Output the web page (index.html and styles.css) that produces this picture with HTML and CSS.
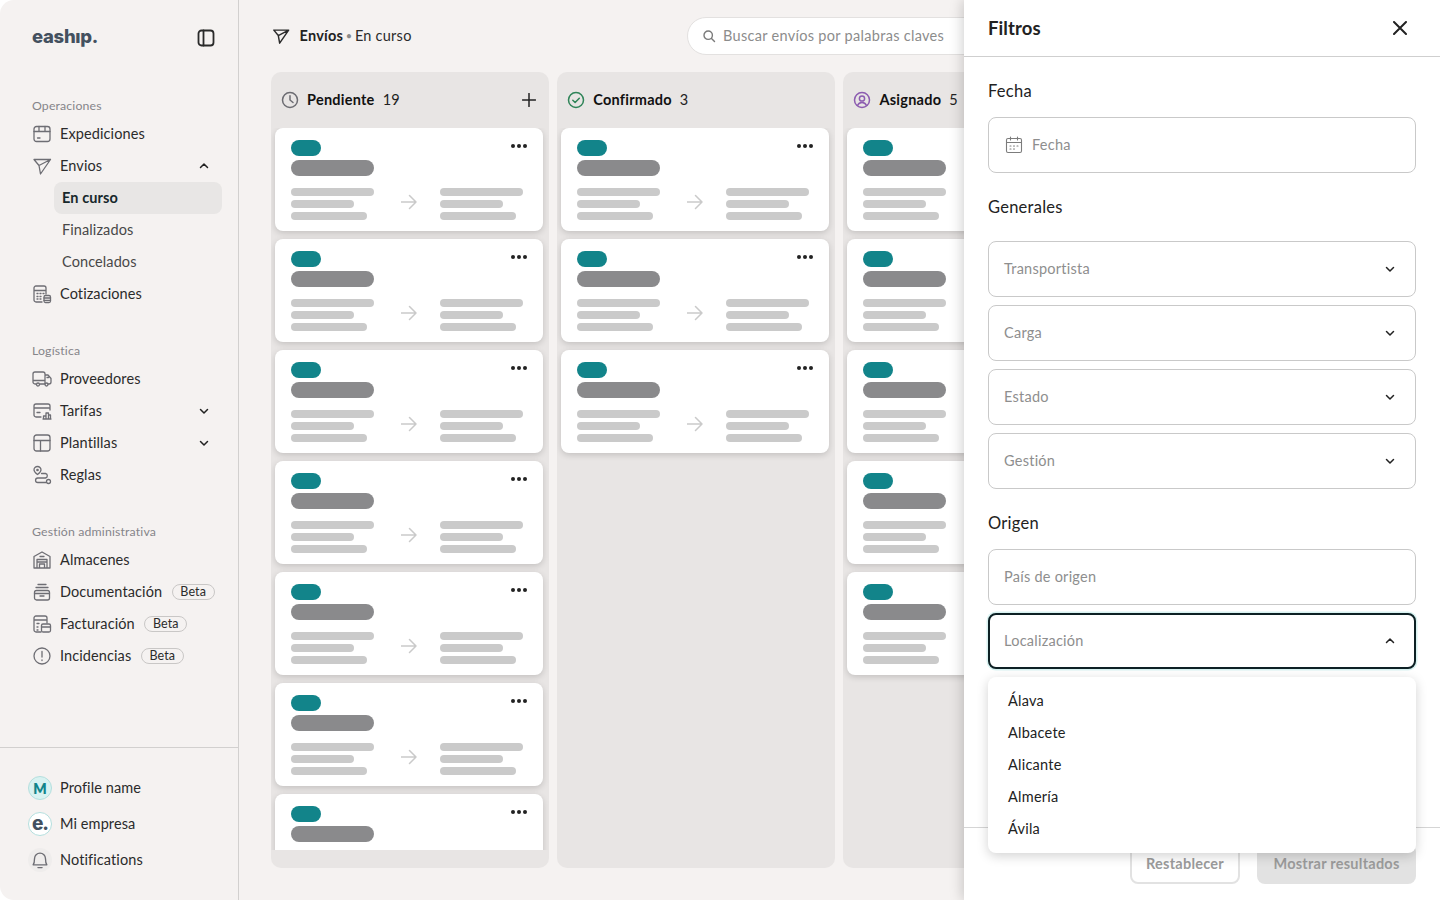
FILE: index.html
```html
<!DOCTYPE html>
<html lang="es">
<head>
<meta charset="utf-8">
<title>Envíos</title>
<link rel="stylesheet" href="styles.css">
</head>
<body>
<svg class="sprite" aria-hidden="true">
  <symbol id="i-box" viewBox="0 0 20 20"><rect x="2" y="2.500" width="16" height="15" rx="2.500"/><path d="M2 7.500h16M7 2.500v5M13 2.500v5M5.500 14h2.500"/></symbol>
  <symbol id="i-send" viewBox="0 0 20 20"><path d="M2 3.500h16.500L8.500 18 7 9.500 2 3.500zM7 9.500l11.500-6"/></symbol>
  <symbol id="i-calc" viewBox="0 0 20 20"><path d="M10 18H4a2 2 0 0 1-2-2V4a2 2 0 0 1 2-2h8a2 2 0 0 1 2 2v6M2 6.500h12M5 9.500h1M8 9.500h1M11 9.500h1M5 12.500h1M8 12.500h1M5 15h1M8 15h1"/><rect x="12" y="11.500" width="6.500" height="7" rx="1.500"/><path d="M12 14h6.500M12 16.300h6.500"/></symbol>
  <symbol id="i-truck" viewBox="0 0 20 20"><path d="M4 15H3a2 2 0 0 1-2-2V5a2 2 0 0 1 2-2h8a2 2 0 0 1 2 2v10H8M13 6h3l3 3.500V13a2 2 0 0 1-2 2h-1M1 11.500h12M15 8.500h1.500"/><circle cx="6" cy="15.500" r="1.500"/><circle cx="14.500" cy="15.500" r="1.500"/></symbol>
  <symbol id="i-rate" viewBox="0 0 20 20"><path d="M9 16H4a2 2 0 0 1-2-2V5a2 2 0 0 1 2-2h12a2 2 0 0 1 2 2v4M2 7h16M5 11.500h3"/><path d="M11.500 18v-3h2.500v3M14 18v-6h2.500v6M16.500 18v-4h2v4M11 18h8"/></symbol>
  <symbol id="i-layout" viewBox="0 0 20 20"><rect x="2" y="2" width="16" height="16" rx="2.500"/><path d="M2 7.500h16M8.500 7.500V18"/></symbol>
  <symbol id="i-rules" viewBox="0 0 20 20"><path d="M5.500 1.500a3.500 3.500 0 0 1 3.500 3.500c0 1.800-1.800 3.200-3.500 4.500C3.800 8.200 2 6.800 2 5a3.500 3.500 0 0 1 3.500-3.500z"/><circle cx="5.500" cy="5" r=".7"/><circle cx="16.500" cy="16.500" r="2"/><path d="M9.500 8.500h4a2.300 2.300 0 0 1 0 4.500H5.800a2.200 2.200 0 0 0 0 4.500h8.200"/></symbol>
  <symbol id="i-store" viewBox="0 0 20 20"><path d="M2 18V6.500L10 2l8 4.500V18zM5 18V9.500h10V18M5 12h10M7.500 14h5v4h-5zM8 6.500h4"/></symbol>
  <symbol id="i-doc" viewBox="0 0 20 20"><path d="M6 2.500h8M4 5.500h12"/><rect x="2.500" y="8.500" width="15" height="9.500" rx="2"/><path d="M2.500 11.500h15M8 14h4"/></symbol>
  <symbol id="i-bill" viewBox="0 0 20 20"><path d="M9 18H4a2 2 0 0 1-2-2V4a2 2 0 0 1 2-2h9a2 2 0 0 1 2 2v5M2 6h13M5 9.500h2M5 13h1M5 16h1"/><rect x="9.500" y="10" width="9" height="8" rx="1.500"/><path d="M9.500 13h9"/></symbol>
  <symbol id="i-alert" viewBox="0 0 20 20"><circle cx="10" cy="10" r="8"/><path d="M10 5.500v5.500M10 14v.5"/></symbol>
  <symbol id="i-panel" viewBox="0 0 20 20"><rect x="2.500" y="2.500" width="15" height="15" rx="3"/><path d="M7.500 2.500v15"/></symbol>
  <symbol id="i-bell" viewBox="0 0 16 16"><path d="M3 11.500c.8-1 1-2 1-4.500a4 4 0 0 1 8 0c0 2.500.2 3.500 1 4.500zM6.500 13.500h3"/></symbol>
  <symbol id="i-down" viewBox="0 0 12 12"><path d="M2.500 4.500 6 8l3.500-3.500"/></symbol>
  <symbol id="i-up" viewBox="0 0 12 12"><path d="M2.500 7.500 6 4l3.500 3.500"/></symbol>
  <symbol id="i-arrow" viewBox="0 0 16 16"><path d="M0 8h15M8.500 1.500 15 8l-6.500 6.500"/></symbol>
  <symbol id="i-dots" viewBox="0 0 16 4"><circle cx="2" cy="2" r="2"/><circle cx="8" cy="2" r="2"/><circle cx="14" cy="2" r="2"/></symbol>
</svg>

<div class="app">
  <aside class="sidebar">
    <div class="brand">
      <span class="logo">eashıp.</span>
      <svg class="icon icon-dark"><use href="#i-panel"/></svg>
    </div>

    <section class="nav-group">
      <h2 class="nav-label">Operaciones</h2>
      <a class="nav-row"><svg class="icon"><use href="#i-box"/></svg>Expediciones</a>
      <a class="nav-row"><svg class="icon"><use href="#i-send"/></svg><span class="grow">Envios</span><svg class="chev"><use href="#i-up"/></svg></a>
      <a class="nav-sub nav-sub-active">En curso</a>
      <a class="nav-sub">Finalizados</a>
      <a class="nav-sub">Concelados</a>
      <a class="nav-row"><svg class="icon"><use href="#i-calc"/></svg>Cotizaciones</a>
    </section>

    <section class="nav-group">
      <h2 class="nav-label">Logística</h2>
      <a class="nav-row"><svg class="icon"><use href="#i-truck"/></svg>Proveedores</a>
      <a class="nav-row"><svg class="icon"><use href="#i-rate"/></svg><span class="grow">Tarifas</span><svg class="chev"><use href="#i-down"/></svg></a>
      <a class="nav-row"><svg class="icon"><use href="#i-layout"/></svg><span class="grow">Plantillas</span><svg class="chev"><use href="#i-down"/></svg></a>
      <a class="nav-row"><svg class="icon"><use href="#i-rules"/></svg>Reglas</a>
    </section>

    <section class="nav-group">
      <h2 class="nav-label">Gestión administrativa</h2>
      <a class="nav-row"><svg class="icon"><use href="#i-store"/></svg>Almacenes</a>
      <a class="nav-row"><svg class="icon"><use href="#i-doc"/></svg>Documentación<span class="beta">Beta</span></a>
      <a class="nav-row"><svg class="icon"><use href="#i-bill"/></svg>Facturación<span class="beta">Beta</span></a>
      <a class="nav-row"><svg class="icon"><use href="#i-alert"/></svg>Incidencias<span class="beta">Beta</span></a>
    </section>

    <footer class="side-foot">
      <a class="foot-row"><span class="avatar avatar-m">M</span>Profile name</a>
      <a class="foot-row"><span class="avatar avatar-e">e.</span>Mi empresa</a>
      <a class="foot-row"><span class="avatar avatar-bell"><svg class="bell"><use href="#i-bell"/></svg></span>Notifications</a>
    </footer>
  </aside>

  <main class="main">
    <header class="topbar">
      <div class="crumbs">
        <svg class="icon icon-dark crumb-icon"><use href="#i-send"/></svg>
        <strong>Envíos</strong><span class="crumb-dot">•</span><span>En curso</span>
      </div>
      <div class="search">
        <svg class="search-icon" viewBox="0 0 14 14"><circle cx="6.200" cy="6.200" r="4.200"/><path d="m9.500 9.500 3 3"/></svg>
        <span>Buscar envíos por palabras claves</span>
      </div>
    </header>

    <div class="board">
      <section class="column">
        <header class="col-head">
          <svg class="status status-gray" viewBox="0 0 18 18"><circle cx="9" cy="9" r="7.500"/><path d="M9 4.800V9l3 2.500"/></svg>
          <b class="col-title">Pendiente</b><span class="col-count">19</span>
          <svg class="plus" viewBox="0 0 14 14"><path d="M7 .5v13M.5 7h13"/></svg>
        </header>
        <div class="cards">
          <article class="card"><div class="card-top"><span class="tag"></span><svg class="dots"><use href="#i-dots"/></svg></div><div class="name"></div><div class="route"><div class="stop"><i class="w1"></i><i class="w2"></i><i class="w3"></i></div><svg class="arrow"><use href="#i-arrow"/></svg><div class="stop"><i class="w1"></i><i class="w2"></i><i class="w3"></i></div></div></article>
          <article class="card"><div class="card-top"><span class="tag"></span><svg class="dots"><use href="#i-dots"/></svg></div><div class="name"></div><div class="route"><div class="stop"><i class="w1"></i><i class="w2"></i><i class="w3"></i></div><svg class="arrow"><use href="#i-arrow"/></svg><div class="stop"><i class="w1"></i><i class="w2"></i><i class="w3"></i></div></div></article>
          <article class="card"><div class="card-top"><span class="tag"></span><svg class="dots"><use href="#i-dots"/></svg></div><div class="name"></div><div class="route"><div class="stop"><i class="w1"></i><i class="w2"></i><i class="w3"></i></div><svg class="arrow"><use href="#i-arrow"/></svg><div class="stop"><i class="w1"></i><i class="w2"></i><i class="w3"></i></div></div></article>
          <article class="card"><div class="card-top"><span class="tag"></span><svg class="dots"><use href="#i-dots"/></svg></div><div class="name"></div><div class="route"><div class="stop"><i class="w1"></i><i class="w2"></i><i class="w3"></i></div><svg class="arrow"><use href="#i-arrow"/></svg><div class="stop"><i class="w1"></i><i class="w2"></i><i class="w3"></i></div></div></article>
          <article class="card"><div class="card-top"><span class="tag"></span><svg class="dots"><use href="#i-dots"/></svg></div><div class="name"></div><div class="route"><div class="stop"><i class="w1"></i><i class="w2"></i><i class="w3"></i></div><svg class="arrow"><use href="#i-arrow"/></svg><div class="stop"><i class="w1"></i><i class="w2"></i><i class="w3"></i></div></div></article>
          <article class="card"><div class="card-top"><span class="tag"></span><svg class="dots"><use href="#i-dots"/></svg></div><div class="name"></div><div class="route"><div class="stop"><i class="w1"></i><i class="w2"></i><i class="w3"></i></div><svg class="arrow"><use href="#i-arrow"/></svg><div class="stop"><i class="w1"></i><i class="w2"></i><i class="w3"></i></div></div></article>
          <article class="card"><div class="card-top"><span class="tag"></span><svg class="dots"><use href="#i-dots"/></svg></div><div class="name"></div><div class="route"><div class="stop"><i class="w1"></i><i class="w2"></i><i class="w3"></i></div><svg class="arrow"><use href="#i-arrow"/></svg><div class="stop"><i class="w1"></i><i class="w2"></i><i class="w3"></i></div></div></article>
        </div>
      </section>

      <section class="column">
        <header class="col-head">
          <svg class="status status-green" viewBox="0 0 18 18"><circle cx="9" cy="9" r="7.500"/><path d="m5.800 9.200 2.300 2.300 4.200-4.300"/></svg>
          <b class="col-title">Confirmado</b><span class="col-count">3</span>
        </header>
        <div class="cards">
          <article class="card"><div class="card-top"><span class="tag"></span><svg class="dots"><use href="#i-dots"/></svg></div><div class="name"></div><div class="route"><div class="stop"><i class="w1"></i><i class="w2"></i><i class="w3"></i></div><svg class="arrow"><use href="#i-arrow"/></svg><div class="stop"><i class="w1"></i><i class="w2"></i><i class="w3"></i></div></div></article>
          <article class="card"><div class="card-top"><span class="tag"></span><svg class="dots"><use href="#i-dots"/></svg></div><div class="name"></div><div class="route"><div class="stop"><i class="w1"></i><i class="w2"></i><i class="w3"></i></div><svg class="arrow"><use href="#i-arrow"/></svg><div class="stop"><i class="w1"></i><i class="w2"></i><i class="w3"></i></div></div></article>
          <article class="card"><div class="card-top"><span class="tag"></span><svg class="dots"><use href="#i-dots"/></svg></div><div class="name"></div><div class="route"><div class="stop"><i class="w1"></i><i class="w2"></i><i class="w3"></i></div><svg class="arrow"><use href="#i-arrow"/></svg><div class="stop"><i class="w1"></i><i class="w2"></i><i class="w3"></i></div></div></article>
        </div>
      </section>

      <section class="column">
        <header class="col-head">
          <svg class="status status-purple" viewBox="0 0 18 18"><circle cx="9" cy="9" r="7.500"/><circle cx="9" cy="7.500" r="2.600"/><path d="M4.500 14.500c1-2.200 2.500-3 4.500-3s3.500.8 4.500 3"/></svg>
          <b class="col-title">Asignado</b><span class="col-count">5</span>
        </header>
        <div class="cards">
          <article class="card"><div class="card-top"><span class="tag"></span><svg class="dots"><use href="#i-dots"/></svg></div><div class="name"></div><div class="route"><div class="stop"><i class="w1"></i><i class="w2"></i><i class="w3"></i></div><svg class="arrow"><use href="#i-arrow"/></svg><div class="stop"><i class="w1"></i><i class="w2"></i><i class="w3"></i></div></div></article>
          <article class="card"><div class="card-top"><span class="tag"></span><svg class="dots"><use href="#i-dots"/></svg></div><div class="name"></div><div class="route"><div class="stop"><i class="w1"></i><i class="w2"></i><i class="w3"></i></div><svg class="arrow"><use href="#i-arrow"/></svg><div class="stop"><i class="w1"></i><i class="w2"></i><i class="w3"></i></div></div></article>
          <article class="card"><div class="card-top"><span class="tag"></span><svg class="dots"><use href="#i-dots"/></svg></div><div class="name"></div><div class="route"><div class="stop"><i class="w1"></i><i class="w2"></i><i class="w3"></i></div><svg class="arrow"><use href="#i-arrow"/></svg><div class="stop"><i class="w1"></i><i class="w2"></i><i class="w3"></i></div></div></article>
          <article class="card"><div class="card-top"><span class="tag"></span><svg class="dots"><use href="#i-dots"/></svg></div><div class="name"></div><div class="route"><div class="stop"><i class="w1"></i><i class="w2"></i><i class="w3"></i></div><svg class="arrow"><use href="#i-arrow"/></svg><div class="stop"><i class="w1"></i><i class="w2"></i><i class="w3"></i></div></div></article>
          <article class="card"><div class="card-top"><span class="tag"></span><svg class="dots"><use href="#i-dots"/></svg></div><div class="name"></div><div class="route"><div class="stop"><i class="w1"></i><i class="w2"></i><i class="w3"></i></div><svg class="arrow"><use href="#i-arrow"/></svg><div class="stop"><i class="w1"></i><i class="w2"></i><i class="w3"></i></div></div></article>
        </div>
      </section>
    </div>
  </main>

  <aside class="panel">
    <header class="panel-head">
      <h1 class="panel-title">Filtros</h1>
      <svg class="close" viewBox="0 0 14 14"><path d="m1 1 12 12M13 1 1 13"/></svg>
    </header>
    <div class="panel-body">
      <h3 class="filter-title first">Fecha</h3>
      <div class="field field-date">
        <svg class="date-icon" viewBox="0 0 18 18"><rect x="1.500" y="2.500" width="15" height="14" rx="1.500"/><path d="M1.500 6.500h15M5.500 1v3M12.500 1v3M5 10h1M8.500 10h1M12 10h1M5 13h1M8.500 13h1"/></svg>
        <span>Fecha</span>
      </div>
      <h3 class="filter-title spaced">Generales</h3>
      <div class="stack">
        <div class="field"><span>Transportista</span><svg class="chev"><use href="#i-down"/></svg></div>
        <div class="field"><span>Carga</span><svg class="chev"><use href="#i-down"/></svg></div>
        <div class="field"><span>Estado</span><svg class="chev"><use href="#i-down"/></svg></div>
        <div class="field"><span>Gestión</span><svg class="chev"><use href="#i-down"/></svg></div>
      </div>
      <h3 class="filter-title">Origen</h3>
      <div class="stack">
        <div class="field"><span>País de origen</span></div>
        <div class="select-wrap">
          <div class="field field-open"><span>Localización</span><svg class="chev"><use href="#i-up"/></svg></div>
          <ul class="menu">
            <li>Álava</li>
            <li>Albacete</li>
            <li>Alicante</li>
            <li>Almería</li>
            <li>Ávila</li>
          </ul>
        </div>
      </div>
    </div>
    <footer class="panel-foot">
      <button class="btn btn-ghost">Restablecer</button>
      <button class="btn btn-solid">Mostrar resultados</button>
    </footer>
  </aside>
</div>
</body>
</html>
```

FILE: styles.css
```css
* { box-sizing: border-box; }
html, body { margin: 0; padding: 0; background: #fff; }
body { font-family: "Lato", "Noto Sans", sans-serif; color: #2b2b2b; font-size: 14.5px; letter-spacing: .25px; overflow: hidden; width: 1440px; height: 903px; }
h1, h2, h3, ul { margin: 0; padding: 0; font-weight: 400; }
.sprite { display: none; }

.app { position: relative; display: flex; width: 1440px; height: 900px; background: #f5f2f1; border-radius: 14px 0 0 14px; overflow: hidden; }

/* Sidebar */
.sidebar { width: 239px; flex: none; display: flex; flex-direction: column; border-right: 1px solid #d2d0cf; padding-top: 28px; }
.brand { display: flex; align-items: center; justify-content: space-between; height: 20px; padding: 0 22px 0 32px; margin-bottom: 48px; }
.logo { font-family: "Inter", sans-serif; font-size: 18.500px; font-weight: 800; letter-spacing: -.3px; color: #43505f; margin-bottom: 4px; }
.icon { width: 20px; height: 20px; flex: none; margin-top: 2px; fill: none; stroke: #6e6e74; stroke-width: 1.3; stroke-linecap: round; stroke-linejoin: round; }
.icon-dark { stroke: #2a2a2a; stroke-width: 1.8; margin-top: 0; }
.nav-group { padding-left: 32px; margin-bottom: 31px; }
.nav-label { font-size: 12.300px; height: 18px; line-height: 19px; margin-bottom: 4px; color: #85858a; letter-spacing: .15px; }
.nav-row { display: flex; align-items: center; gap: 8px; height: 32px; width: 190px; padding: 0 12px 2px 0; white-space: nowrap; letter-spacing: .1px; }
.grow { flex: 1; }
.chev { width: 12px; height: 12px; flex: none; margin-top: 2px; fill: none; stroke: #222; stroke-width: 1.500; stroke-linecap: round; stroke-linejoin: round; }
.nav-sub { display: flex; align-items: center; height: 32px; width: 168px; margin-left: 22px; padding: 0 0 2px 8px; color: #484848; border-radius: 8px; letter-spacing: .1px; }
.nav-sub-active { background: #e8e6e5; color: #17282b; font-weight: 700; }
.beta { display: inline-flex; flex: none; align-items: center; justify-content: center; width: 43px; height: 16px; margin: 2px 0 0 1.500px; padding-bottom: 1px; border: 1px solid #c9c7c6; border-radius: 8px; font-size: 12.500px; }

.side-foot { margin-top: auto; height: 153px; border-top: 1px solid #d2d0cf; padding: 22px 0 22px 28px; }
.foot-row { display: flex; align-items: center; gap: 8px; height: 36px; padding-bottom: 2px; letter-spacing: .1px; }
.avatar { display: flex; align-items: center; justify-content: center; width: 24px; height: 24px; margin-top: 2px; border-radius: 50%; flex: none; }
.avatar-m { background: #d8f2f1; border: 1px solid #b4dfde; color: #12848a; font-weight: 800; font-size: 14px; letter-spacing: 0; }
.avatar-e { background: #fff; border: 1px solid #b4dfde; color: #43505f; font-family: "Inter", sans-serif; font-weight: 800; font-size: 19px; letter-spacing: -1px; padding-bottom: 2px; }
.avatar-bell { background: #efedec; }
.bell { width: 22px; height: 22px; fill: none; stroke: #6e6e74; stroke-width: 1; stroke-linecap: round; stroke-linejoin: round; }

/* Main */
.main { flex: 1; min-width: 0; padding: 17px 32px 0; }
.topbar { display: flex; align-items: center; justify-content: space-between; height: 38px; }
.crumbs { display: flex; align-items: center; gap: 2.500px; padding-bottom: 1px; }
.crumbs strong { font-weight: 700; color: #222; }
.crumb-icon { margin: 1px 7px 0 1px; width: 18px; height: 18px; stroke-width: 1.600; }
.crumb-dot { color: #8a8a8a; font-size: 11px; }
.search { display: flex; align-items: center; gap: 7px; width: 721px; height: 38px; padding: 0 0 1px 14px; background: #fff; border: 1px solid #e3e1e0; border-radius: 19px; color: #8c8c8c; letter-spacing: .3px; }
.search-icon { width: 14px; height: 14px; margin-top: 1px; fill: none; stroke: #7a7a7a; stroke-width: 1.400; stroke-linecap: round; }

.board { display: flex; gap: 8px; margin-top: 17px; }
.column { width: 278.200px; height: 796px; flex: none; background: #e8e5e4; border-radius: 10px; padding-bottom: 18px; }
.col-head { display: flex; align-items: center; height: 56px; padding: 0 13px 2px 10px; }
.status { width: 18px; height: 18px; flex: none; margin: 2px 8px 0 0; fill: none; stroke-width: 1.500; stroke-linecap: round; stroke-linejoin: round; }
.status-gray { stroke: #6c6c72; }
.status-green { stroke: #2f8458; }
.status-purple { stroke: #8c5cb0; }
.col-title { font-weight: 700; color: #111; letter-spacing: .25px; }
.col-count { margin-left: 8px; color: #222; }
.plus { width: 14px; height: 14px; margin: 2px 0 0 auto; fill: none; stroke: #222; stroke-width: 1.500; stroke-linecap: round; }
.cards { display: flex; flex-direction: column; gap: 8px; height: 722px; overflow: hidden; padding: 0 6px 0 4.100px; }
.card { flex: none; height: 103px; background: #fff; border-radius: 8px; padding: 12px 16px; box-shadow: 0 2px 6px rgba(0, 0, 0, .16); }
.card-top { display: flex; align-items: flex-start; justify-content: space-between; }
.tag { width: 30px; height: 16px; background: #12848a; border-radius: 8px; }
.dots { width: 16px; height: 4px; margin-top: 4px; fill: #222; }
.name { width: 83px; height: 16px; margin-top: 4px; background: #8a8a8c; border-radius: 8px; }
.route { display: flex; align-items: center; justify-content: space-between; margin-top: 12px; padding-right: 4px; }
.stop { display: flex; flex-direction: column; gap: 4px; width: 83px; }
.stop i { display: block; height: 8px; background: #cacaca; border-radius: 4px; }
.w1 { width: 83px; }
.w2 { width: 63px; }
.w3 { width: 76px; }
.arrow { width: 16px; height: 16px; margin: 0 0 4px 4px; fill: none; stroke: #cacaca; stroke-width: 1.500; stroke-linecap: round; stroke-linejoin: round; }

/* Filter panel */
.panel { position: absolute; top: 0; right: 0; bottom: 0; width: 476px; display: flex; flex-direction: column; background: #fff; box-shadow: -2px 0 12px rgba(0, 0, 0, .18); }
.panel-head { display: flex; align-items: center; justify-content: space-between; height: 57px; flex: none; padding: 0 33px 0 24px; border-bottom: 1px solid #cfcfcf; }
.panel-title { font-size: 18.500px; font-weight: 700; color: #222; letter-spacing: .1px; }
.close { width: 14px; height: 14px; fill: none; stroke: #222; stroke-width: 2; stroke-linecap: round; }
.panel-body { flex: 1; padding: 0 24px; }
.filter-title { font-size: 16.500px; height: 20px; line-height: 20px; margin: 24px 0 16px; color: #222; }
.filter-title.spaced { margin-bottom: 24px; }
.field { display: flex; align-items: center; justify-content: space-between; height: 56px; padding: 0 19px 2px 15px; background: #fff; border: 1px solid #c9c9c9; border-radius: 8px; color: #8e8e8e; }
.field-date { justify-content: flex-start; gap: 9px; }
.date-icon { width: 18px; height: 18px; flex: none; margin: 2px 0 0 1px; fill: none; stroke: #7c7c7c; stroke-width: 1.100; stroke-linecap: round; }
.stack { display: flex; flex-direction: column; gap: 8px; }
.select-wrap { position: relative; }
.field-open { border: 2px solid #0d2024; box-shadow: 0 0 0 1.500px #d8f2f1; padding-left: 14px; padding-right: 18px; }
.menu { position: absolute; z-index: 2; top: 64px; left: 0; right: 0; padding: 8px 0; list-style: none; background: #fff; border-radius: 8px; box-shadow: 0 3px 12px rgba(0, 0, 0, .18); }
.menu li { display: flex; align-items: center; height: 32px; padding: 0 0 2px 20px; color: #222; }
.panel-foot { display: flex; justify-content: flex-end; gap: 17px; height: 73px; flex: none; padding: 16px 24px; border-top: 1px solid #d5d5d5; }
.btn { height: 40px; padding-bottom: 2px; border-radius: 8px; font: 700 14.500px "Lato", sans-serif; letter-spacing: .25px; color: #9b9b9b; }
.btn-ghost { width: 110px; background: #fff; border: 2px solid #e2e2e2; }
.btn-solid { width: 159px; background: #e2e2e2; border: 0; }
```
